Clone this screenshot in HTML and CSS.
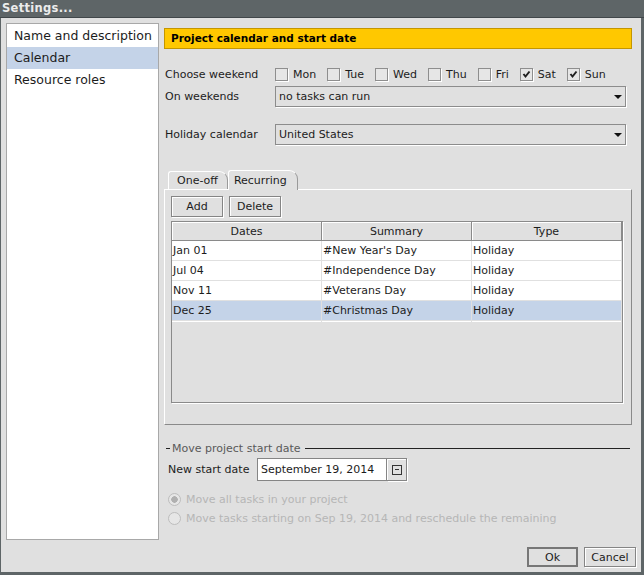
FILE: index.html
```html
<!DOCTYPE html>
<html lang="en">

<head>
    <meta charset="UTF-8">
    <title>Settings...</title>
    <link rel="stylesheet" href="styles.css">
</head>

<body>
    <div class="window">
        <div class="titlebar">Settings...</div>

        <div class="body">
            <div class="main">
                <ul class="nav">
                    <li>Name and description</li>
                    <li class="active">Calendar</li>
                    <li>Resource roles</li>
                </ul>

                <div class="content">
                    <div class="banner">Project calendar and start date</div>

                    <div class="row weekend">
                        <span class="label">Choose weekend</span>
                        <label class="check"><span class="box"></span>Mon</label>
                        <label class="check"><span class="box"></span>Tue</label>
                        <label class="check"><span class="box"></span>Wed</label>
                        <label class="check"><span class="box"></span>Thu</label>
                        <label class="check"><span class="box"></span>Fri</label>
                        <label class="check"><span class="box"><svg width="11" height="11" viewBox="0 0 11 11"><path d="M2.5 5 L4.5 7.5 L8.5 2.5" fill="none" stroke="#202020" stroke-width="2"/></svg></span>Sat</label>
                        <label class="check"><span class="box"><svg width="11" height="11" viewBox="0 0 11 11"><path d="M2.5 5 L4.5 7.5 L8.5 2.5" fill="none" stroke="#202020" stroke-width="2"/></svg></span>Sun</label>
                    </div>

                    <div class="row combo-row">
                        <span class="label">On weekends</span>
                        <div class="combo">no tasks can run<span class="arrow"></span></div>
                    </div>

                    <div class="row combo-row holiday">
                        <span class="label">Holiday calendar</span>
                        <div class="combo">United States<span class="arrow"></span></div>
                    </div>

                    <div class="tabs">
                        <div class="tab">One-off</div>
                        <div class="tab active">Recurring</div>
                    </div>
                    <div class="tab-panel">
                        <div class="toolbar">
                            <button class="btn">Add</button>
                            <button class="btn">Delete</button>
                        </div>
                        <div class="grid">
                            <table>
                                <tr>
                                    <th>Dates</th>
                                    <th>Summary</th>
                                    <th>Type</th>
                                </tr>
                                <tr>
                                    <td>Jan 01</td>
                                    <td>#New Year's Day</td>
                                    <td>Holiday</td>
                                </tr>
                                <tr>
                                    <td>Jul 04</td>
                                    <td>#Independence Day</td>
                                    <td>Holiday</td>
                                </tr>
                                <tr>
                                    <td>Nov 11</td>
                                    <td>#Veterans Day</td>
                                    <td>Holiday</td>
                                </tr>
                                <tr class="selected">
                                    <td>Dec 25</td>
                                    <td>#Christmas Day</td>
                                    <td>Holiday</td>
                                </tr>
                                <tr>
                                    <td></td>
                                    <td></td>
                                    <td></td>
                                </tr>
                            </table>
                        </div>
                    </div>

                    <div class="titled">
                        <span class="dash"></span>
                        <span class="title">Move project start date</span>
                        <span class="line"></span>
                    </div>

                    <div class="date-row">
                        <span class="date-label">New start date</span>
                        <div class="date-input">September 19, 2014</div>
                        <div class="date-btn"><span class="minus-box"></span></div>
                    </div>

                    <div class="radio-row first">
                        <span class="radio on"></span>Move all tasks in your project
                    </div>
                    <div class="radio-row">
                        <span class="radio"></span>Move tasks starting on Sep 19, 2014 and reschedule the remaining
                    </div>
                </div>
            </div>

            <div class="actions">
                <button class="btn default">Ok</button>
                <button class="btn">Cancel</button>
            </div>
        </div>
    </div>
</body>

</html>
```

FILE: styles.css
```css
body {
    margin: 0;
    background-color: #5e6567;
    font-family: "DejaVu Sans", sans-serif;
    font-size: 11px;
    color: #1c1c1c;
}

.window {
    width: 644px;
    height: 575px;
    display: flex;
    flex-direction: column;
}

.titlebar {
    height: 17px;
    line-height: 16px;
    padding-left: 2px;
    color: #ececec;
    font-weight: bold;
    font-size: 11.5px;
    letter-spacing: 0.3px;
    border-bottom: 1px solid #41474a;
}

.body {
    flex: 1;
    margin: 0 3px 3px 1px;
    padding: 5px 5px 5px 5px;
    background-color: #e0e0e0;
    display: flex;
    flex-direction: column;
}

.main {
    flex: 1;
    display: flex;
    gap: 5px;
}

.nav {
    width: 153px;
    box-sizing: border-box;
    margin: 0;
    padding: 1px 0 0;
    list-style: none;
    background-color: #fff;
    border: 1px solid #a8a8a8;
    font-size: 12.5px;
}

.nav li {
    height: 22px;
    line-height: 22px;
    padding-left: 7px;
}

.nav .active {
    background-color: #c4d3e8;
}

.content {
    width: 468px;
}

.banner {
    margin-top: 5px;
    height: 21px;
    box-sizing: border-box;
    line-height: 19px;
    padding-left: 6px;
    background-color: #ffc800;
    border: 1px solid #c49600;
    font-weight: bold;
    font-size: 10.5px;
    color: #000;
}

.row {
    display: flex;
    align-items: center;
}

.label {
    width: 110px;
    padding-left: 1px;
}

.weekend {
    margin-top: 17px;
    height: 16px;
}

.check {
    display: flex;
    align-items: center;
    margin-right: 11px;
}

.box {
    width: 13px;
    height: 13px;
    box-sizing: border-box;
    margin-right: 5px;
    border: 1px solid #8e8e8e;
    background-color: #e6e6e6;
    box-shadow: 1px 1px 0 #fff;
    display: flex;
    align-items: center;
    justify-content: center;
}

.combo-row {
    margin-top: 4px;
}

.holiday {
    margin-top: 17px;
}

.combo {
    width: 351px;
    height: 21px;
    box-sizing: border-box;
    padding: 0 3px 0 3px;
    border: 1px solid #8c8c8c;
    box-shadow: 1px 1px 0 #fff;
    display: flex;
    align-items: center;
    justify-content: space-between;
}

.arrow {
    width: 0;
    height: 0;
    border-left: 4px solid transparent;
    border-right: 4px solid transparent;
    border-top: 4px solid #111;
}

.tabs {
    margin-top: 25px;
    padding-left: 4px;
    display: flex;
    align-items: flex-end;
    height: 19px;
}

.tab {
    height: 17px;
    line-height: 17px;
    padding: 0 9px 0 8px;
    border-top: 1px solid #fff;
    border-left: 1px solid #fff;
    border-right: 1px solid #9a9a9a;
    border-radius: 3px 9px 0 0;
}

.tab.active {
    height: 19px;
    line-height: 19px;
    padding: 0 10px 0 5px;
    margin-bottom: -1px;
    position: relative;
    background-color: #e0e0e0;
}

.tab-panel {
    height: 236px;
    box-sizing: border-box;
    padding: 6px 8px 0 6px;
    border-top: 1px solid #fff;
    border-left: 1px solid #fff;
    border-right: 1px solid #8a8a8a;
    border-bottom: 1px solid #8a8a8a;
}

.toolbar {
    display: flex;
    gap: 6px;
}

.btn {
    height: 21px;
    width: 52px;
    box-sizing: border-box;
    padding: 0;
    border: 1px solid #858585;
    background-color: #e0e0e0;
    box-shadow: inset 1px 1px 0 #fff, 1px 1px 0 #fff;
    font-family: inherit;
    font-size: 11px;
    color: #1c1c1c;
}

.grid {
    margin-top: 4px;
    width: 452px;
    height: 182px;
    box-sizing: border-box;
    border: 1px solid #8a8a8a;
    box-shadow: 1px 1px 0 #fff;
}

table {
    width: 450px;
    table-layout: fixed;
    border-spacing: 0;
}

th {
    padding: 1px 0 0;
    line-height: 17px;
    font-weight: normal;
    border-right: 1px solid #8a8a8a;
    border-bottom: 1px solid #8a8a8a;
    box-shadow: inset 1px 1px 0 #fff;
}

td {
    padding: 1px 0 0 1px;
    line-height: 18px;
    background-color: #fff;
    border-right: 1px solid #e0e0e0;
    border-bottom: 1px solid #e0e0e0;
    white-space: nowrap;
}

.selected td {
    background-color: #c4d3e8;
}

.titled {
    margin-top: 16px;
    height: 14px;
    display: flex;
    align-items: center;
    color: #5a5a5a;
}

.dash {
    width: 4px;
    height: 1px;
    margin: 0 2px 0 2px;
    background-color: #222;
}

.line {
    flex: 1;
    height: 1px;
    margin: 0 2px 0 4px;
    background-color: #222;
}

.date-row {
    margin-top: 3px;
    display: flex;
    align-items: center;
    height: 23px;
}

.date-label {
    width: 93px;
    box-sizing: border-box;
    padding-left: 4px;
}

.date-input {
    width: 130px;
    height: 23px;
    box-sizing: border-box;
    padding-left: 3px;
    line-height: 21px;
    background-color: #fff;
    border: 1px solid #858585;
}

.date-btn {
    width: 20px;
    height: 23px;
    box-sizing: border-box;
    border: 1px solid #858585;
    border-left: none;
    box-shadow: inset 1px 1px 0 #fff, 1px 1px 0 #fff;
    display: flex;
    align-items: center;
    justify-content: center;
}

.minus-box {
    width: 10px;
    height: 10px;
    box-sizing: border-box;
    border: 1px solid #333;
    background: linear-gradient(#333, #333) center / 4px 1px no-repeat;
}

.radio-row {
    height: 19px;
    display: flex;
    align-items: center;
    padding-left: 4px;
    color: #b6b6b6;
}

.radio-row.first {
    margin-top: 9px;
}

.radio {
    width: 13px;
    height: 13px;
    box-sizing: border-box;
    margin-right: 5px;
    border: 1px solid #bdbdbd;
    border-radius: 50%;
    background-color: #e6e6e6;
}

.radio.on {
    background: radial-gradient(circle, #b0b0b0 3px, #e6e6e6 3.5px);
}

.actions {
    margin-top: 7px;
    display: flex;
    justify-content: flex-end;
    gap: 6px;
}

.actions .btn {
    height: 20px;
}

.actions .default {
    width: 51px;
    border: 2px solid #777;
    box-shadow: none;
}
```
